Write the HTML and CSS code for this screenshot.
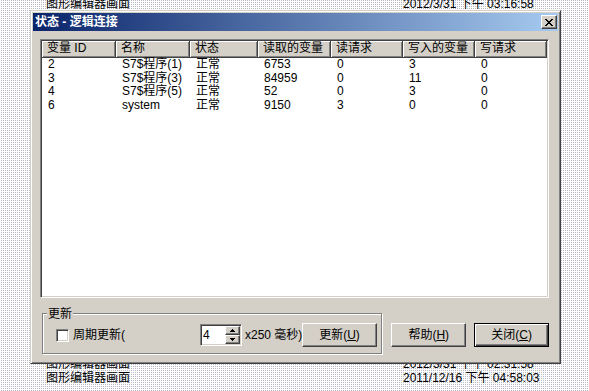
FILE: index.html
```html
<!DOCTYPE html>
<html>
<head>
<meta charset="utf-8">
<title>状态 - 逻辑连接</title>
<link rel="stylesheet" href="styles.css">
</head>
<body>
<div class="desk">
  <div class="bgrow"><span class="c1">图形编辑器画面</span><span class="c2">2012/3/31 下午 03:16:58</span></div>
  <div class="gap"></div>
  <div class="bgrow"><span class="c1">图形编辑器画面</span><span class="c2">2012/3/31 下午 02:31:58</span></div>
  <div class="bgrow"><span class="c1">图形编辑器画面</span><span class="c2">2011/12/16 下午 04:58:03</span></div>
</div>

<div class="dialog">
  <div class="titlebar">
    <span class="title">状态 - 逻辑连接</span>
    <span class="close">
      <svg width="8" height="7" viewBox="0 0 8 7" shape-rendering="crispEdges">
        <path d="M0 0h2v1h-2zM6 0h2v1h-2zM1 1h2v1h-2zM5 1h2v1h-2zM2 2h4v1h-4zM3 3h2v1h-2zM2 4h4v1h-4zM1 5h2v1h-2zM5 5h2v1h-2zM0 6h2v1h-2zM6 6h2v1h-2z" fill="#000"/>
      </svg>
    </span>
  </div>
  <div class="body">
    <div class="listview">
      <div class="cols header">
        <div class="th">变量 ID</div>
        <div class="th">名称</div>
        <div class="th">状态</div>
        <div class="th">读取的变量</div>
        <div class="th">读请求</div>
        <div class="th">写入的变量</div>
        <div class="th">写请求</div>
      </div>
      <div class="cols row"><div class="td">2</div><div class="td">S7$程序(1)</div><div class="td">正常</div><div class="td">6753</div><div class="td">0</div><div class="td">3</div><div class="td">0</div></div>
      <div class="cols row"><div class="td">3</div><div class="td">S7$程序(3)</div><div class="td">正常</div><div class="td">84959</div><div class="td">0</div><div class="td">11</div><div class="td">0</div></div>
      <div class="cols row"><div class="td">4</div><div class="td">S7$程序(5)</div><div class="td">正常</div><div class="td">52</div><div class="td">0</div><div class="td">3</div><div class="td">0</div></div>
      <div class="cols row"><div class="td">6</div><div class="td">system</div><div class="td">正常</div><div class="td">9150</div><div class="td">3</div><div class="td">0</div><div class="td">0</div></div>
    </div>

    <div class="bottom">
      <div class="group">
        <span class="legend">更新</span>
        <div class="grow">
          <span class="check"></span>
          <span class="cblabel">周期更新(</span>
          <span class="spin">
            <span class="val">4</span>
            <span class="arrows">
              <span class="sbtn"><svg width="5" height="3" viewBox="0 0 5 3" shape-rendering="crispEdges"><path d="M2 0h1v1h1v1h1v1h-5v-1h1v-1h1z" fill="#000"/></svg></span>
              <span class="sbtn"><svg width="5" height="3" viewBox="0 0 5 3" shape-rendering="crispEdges"><path d="M0 0h5v1h-1v1h-1v1h-1v-1h-1v-1h-1z" fill="#000"/></svg></span>
            </span>
          </span>
          <span class="unit">x250 毫秒)</span>
          <span class="btn">更新(<u>U</u>)</span>
        </div>
      </div>
      <span class="btn help">帮助(<u>H</u>)</span>
      <span class="btn default">关闭(<u>C</u>)</span>
    </div>
  </div>
</div>
</body>
</html>
```

FILE: styles.css
```css
* { box-sizing: border-box; }
html, body { margin: 0; height: 100%; }
body {
  font: 12px/14px "Liberation Sans", "Noto Sans CJK SC", sans-serif;
  color: #000;
  background: #fff conic-gradient(#b8b8c6 25%, #fff 0) 0 0 / 2px 2px;
  overflow: hidden;
  position: relative;
}
.desk { margin-top: -3px; }
.bgrow { display: flex; height: 14px; line-height: 14px; white-space: nowrap; }
.c1 { margin-left: 46px; width: 357px; }
.gap { height: 346px; }

.dialog {
  position: absolute;
  left: 30px; top: 10px;
  width: 531px; height: 354px;
  background: #d4d0c8;
  border: 1px solid;
  border-color: #d4d0c8 #404040 #404040 #d4d0c8;
  box-shadow: inset 1px 1px #fff, inset -1px -1px #808080;
  padding: 2px;
  display: flex;
  flex-direction: column;
}
.titlebar {
  height: 18px;
  flex: none;
  background: linear-gradient(to right, #0a246a, #a6caf0);
  display: flex;
  align-items: center;
  padding-left: 2px;
  color: #fff;
  font-weight: bold;
}
.title { line-height: 18px; }
.close {
  margin-left: auto;
  margin-right: 1px;
  width: 16px; height: 14px;
  background: #d4d0c8;
  border: 1px solid;
  border-color: #fff #404040 #404040 #fff;
  box-shadow: inset -1px -1px #808080;
  display: flex;
  align-items: center;
  justify-content: center;
  padding-right: 1px;
}
.close svg { display: block; }

.body { padding: 8px 9px 0 7px; }

.listview {
  height: 259px;
  background: #fff;
  border: 1px solid;
  border-color: #808080 #fff #fff #808080;
  box-shadow: inset 1px 1px #404040, inset -1px -1px #d4d0c8;
  padding: 1px;
}
.cols {
  display: grid;
  grid-template-columns: 74px 74px 68px 73px 72px 72px 72px;
}
.header { height: 17px; }
.th {
  background: #d4d0c8;
  border-right: 1px solid #404040;
  border-bottom: 1px solid #404040;
  box-shadow: inset 1px 1px #fff, inset -1px -1px #808080;
  padding-left: 5px;
  line-height: 15px;
  white-space: nowrap;
  overflow: hidden;
}
.row { height: 13.5px; line-height: 13.5px; }
.td { padding-left: 6px; white-space: nowrap; }

.bottom {
  display: flex;
  align-items: flex-start;
  margin-top: 15px;
  padding-left: 2px;
}
.group {
  position: relative;
  width: 341px; height: 41px;
  border: 1px solid #808080;
  box-shadow: inset 1px 1px #fff, 1px 1px #fff;
  padding: 9px 0 0 13px;
}
.legend {
  position: absolute;
  left: 4px; top: -7px;
  padding: 0 1px;
  background: #d4d0c8;
  line-height: 14px;
}
.grow { display: flex; align-items: center; height: 24px; }
.check {
  width: 13px; height: 13px;
  background: #fff;
  border: 1px solid;
  border-color: #808080 #fff #fff #808080;
  box-shadow: inset 1px 1px #404040, inset -1px -1px #d4d0c8;
}
.cblabel { margin-left: 4px; width: 127px; }
.spin {
  width: 42px; height: 22px;
  background: #fff;
  border: 1px solid;
  border-color: #808080 #fff #fff #808080;
  box-shadow: inset 1px 1px #404040, inset -1px -1px #d4d0c8;
  padding: 1px;
  display: flex;
}
.val { padding-left: 1px; line-height: 18px; }
.arrows { margin-left: auto; display: flex; flex-direction: column; }
.sbtn {
  width: 15px; height: 9px;
  background: #d4d0c8;
  border: 1px solid;
  border-color: #fff #404040 #404040 #fff;
  box-shadow: inset -1px -1px #808080;
  display: flex;
  align-items: center;
  justify-content: center;
}
.sbtn svg { display: block; }
.unit { margin-left: 3px; width: 57px; white-space: nowrap; }
.btn {
  width: 75px; height: 24px;
  background: #d4d0c8;
  border: 1px solid;
  border-color: #fff #404040 #404040 #fff;
  box-shadow: inset -1px -1px #808080;
  display: flex;
  align-items: center;
  justify-content: center;
  white-space: nowrap;
}
.help { margin-left: 9px; margin-top: 10px; }
.default {
  margin-left: 8px; margin-top: 10px;
  border: 1px solid #000;
  box-shadow: inset 1px 1px #fff, inset -1px -1px #404040, inset -2px -2px #808080;
}
```
